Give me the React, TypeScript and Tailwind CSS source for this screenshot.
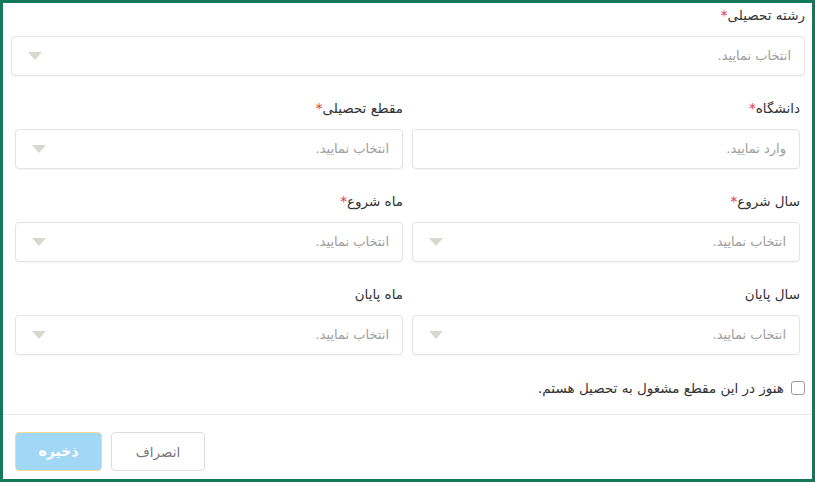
const font = { fontFamily: '"DejaVu Sans", "Noto Sans", sans-serif' };

const Caret = () => (
  <svg width="14" height="8" viewBox="0 0 14 8" className="shrink-0">
    <path d="M0 0 L14 0 L7 8 Z" fill="#d8d8d0" />
  </svg>
);

const Label = ({ text, required }: { text: string; required?: boolean }) => (
  <div className="h-5 leading-5 text-[13.5px] text-[#333] mb-[11px]">
    {text}
    {required && <span className="text-[#e53935]">*</span>}
  </div>
);

const SelectBox = ({ placeholder = "انتخاب نمایید.", caret = true }: { placeholder?: string; caret?: boolean }) => (
  <div className="h-10 flex items-center justify-between rounded border border-[#e3e3e3] bg-white pr-[13px] pl-4 shadow-[0_1px_2px_rgba(0,0,0,0.04)]">
    <span className="text-[13px] text-[#9e9e9e]">{placeholder}</span>
    {caret && <Caret />}
  </div>
);

const Field = ({ label, required, placeholder, caret }: { label: string; required?: boolean; placeholder?: string; caret?: boolean }) => (
  <div className="flex flex-col">
    <Label text={label} required={required} />
    <SelectBox placeholder={placeholder} caret={caret} />
  </div>
);

export default function App() {
  return (
    <div dir="rtl" style={font} className="w-[815px] h-[482px] bg-white border-[3px] border-[#16785a] flex flex-col">
      <div className="pt-[2px] pr-[7px] pl-2">
        <Label text="رشته تحصیلی" required />
        <SelectBox />
      </div>

      <div className="px-3 pt-[22px] grid grid-cols-2 gap-x-[9px] gap-y-[22px]">
        <Field label="دانشگاه" required placeholder="وارد نمایید." caret={false} />
        <Field label="مقطع تحصیلی" required />
        <Field label="سال شروع" required />
        <Field label="ماه شروع" required />
        <Field label="سال پایان" />
        <Field label="ماه پایان" />
      </div>

      <div className="pr-[7px] pt-[23px] flex items-center gap-[7px]">
        <span className="w-[14px] h-[14px] rounded-[3px] border border-[#9a9a9a] bg-white" />
        <span className="text-[13.5px] text-[#333]">هنوز در این مقطع مشغول به تحصیل هستم.</span>
      </div>

      <div className="mt-[16px] border-t border-[#e8e8e8]" />

      <div className="pt-[17px] pl-3 flex justify-end gap-[9px]">
        <button className="h-[39px] w-[94px] rounded border border-[#dcdcdc] bg-white text-[13.5px] text-[#777]">
          انصراف
        </button>
        <button className="h-[39px] w-[87px] rounded border border-[#f0dc98] bg-[#a3d7f6] text-[14px] font-bold text-white">
          ذخیره
        </button>
      </div>
    </div>
  );
}
